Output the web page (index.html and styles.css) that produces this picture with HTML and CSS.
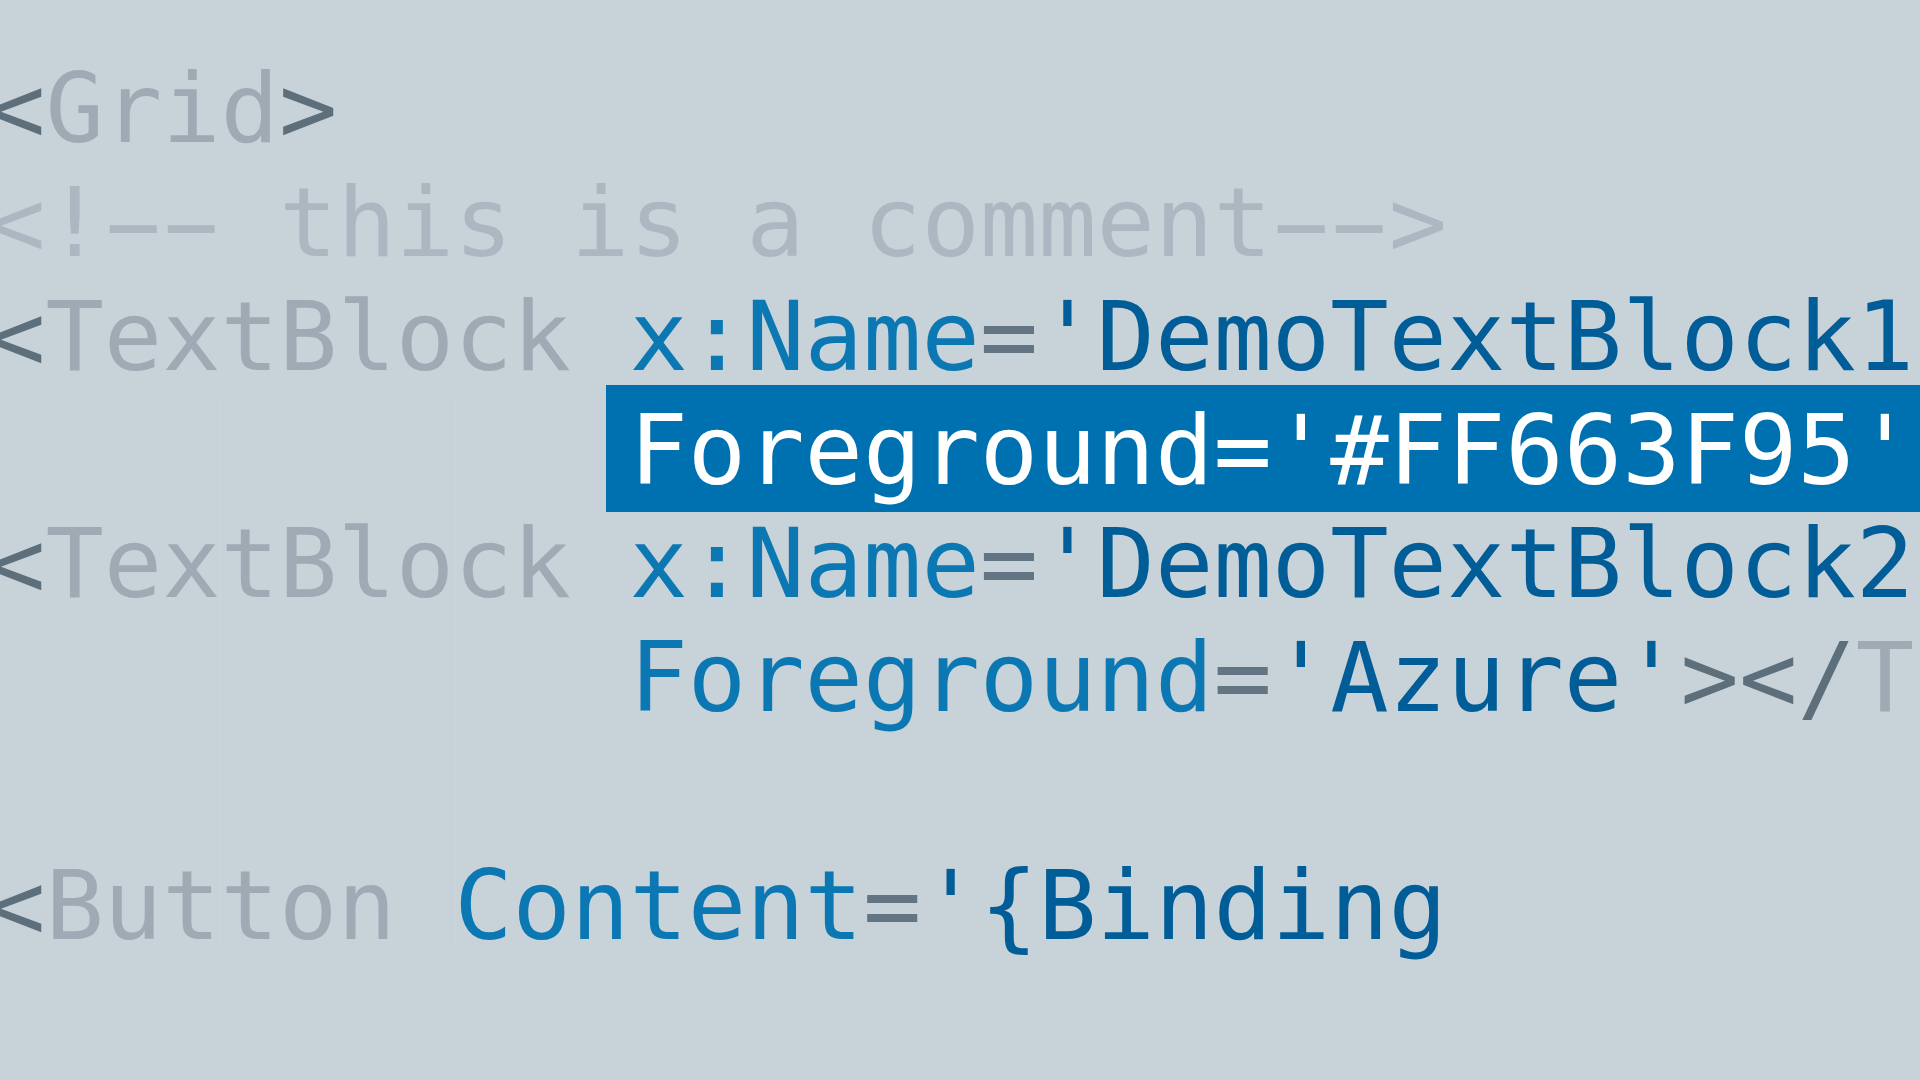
FILE: index.html
```html
<!DOCTYPE html>
<html lang="en">
<head>
<meta charset="utf-8">
<title>XAML snippet</title>
<link rel="stylesheet" href="styles.css">
</head>
<body>
<main class="code">
<div class="line"><span class="br">&lt;</span><span class="tag">Grid</span><span class="br">&gt;</span></div>
<div class="line"><span class="cm">&lt;!<span class="dash">-</span><span class="dash">-</span> this is a comment<span class="dash">-</span><span class="dash">-</span>&gt;</span></div>
<div class="line"><span class="br">&lt;</span><span class="tag">TextBlock</span> <span class="attr">x:Name</span><span class="eq">=</span><span class="val">'DemoTextBlock1'</span></div>
<div class="line">           <span class="hl">Foreground='#FF663F95'</span></div>
<div class="line"><span class="br">&lt;</span><span class="tag">TextBlock</span> <span class="attr">x:Name</span><span class="eq">=</span><span class="val">'DemoTextBlock2'</span></div>
<div class="line">           <span class="attr">Foreground</span><span class="eq">=</span><span class="val">'Azure'</span><span class="br">&gt;&lt;/</span><span class="tag">TextBlock</span><span class="br">&gt;</span></div>
<div class="line"> </div>
<div class="line"><span class="br">&lt;</span><span class="tag">Button</span> <span class="attr">Content</span><span class="eq">=</span><span class="val">'{Binding</span></div>
</main>
</body>
</html>
```
FILE: styles.css
```css
html, body {
  margin: 0;
  padding: 0;
  width: 1920px;
  height: 1080px;
  overflow: hidden;
}

body {
  background-color: #c7d2d9;
  background-image:
    linear-gradient(to right, transparent 220px, rgba(255,255,255,0.08) 220px, rgba(255,255,255,0.08) 221px, transparent 221px),
    linear-gradient(to right, transparent 455px, rgba(255,255,255,0.08) 455px, rgba(255,255,255,0.08) 456px, transparent 456px);
  background-repeat: no-repeat;
  background-position: 0 395px, 0 395px;
  background-size: 100% 550px, 100% 550px;
}

.code {
  display: block;
  margin-left: -13px;
  padding-top: 52px;
  font-family: "DejaVu Sans Mono", "Liberation Mono", monospace;
  font-size: 97px;
  line-height: 113.86px;
  color: #9eabb5;
}

.line {
  height: 113.86px;
  white-space: pre;
}

.br { color: #5e6f7c; }
.eq { color: #637482; }
.tag { color: #9eabb5; }
.cm { color: #abb8c2; }
.attr { color: #0b78b4; }
.val { color: #005d97; }

.dash {
  display: inline-block;
  transform: scaleX(1.9);
}

.hl {
  background: #0071b0;
  color: #ffffff;
  padding: 9px 200px 5px 23px;
  margin-left: -23px;
}
```
